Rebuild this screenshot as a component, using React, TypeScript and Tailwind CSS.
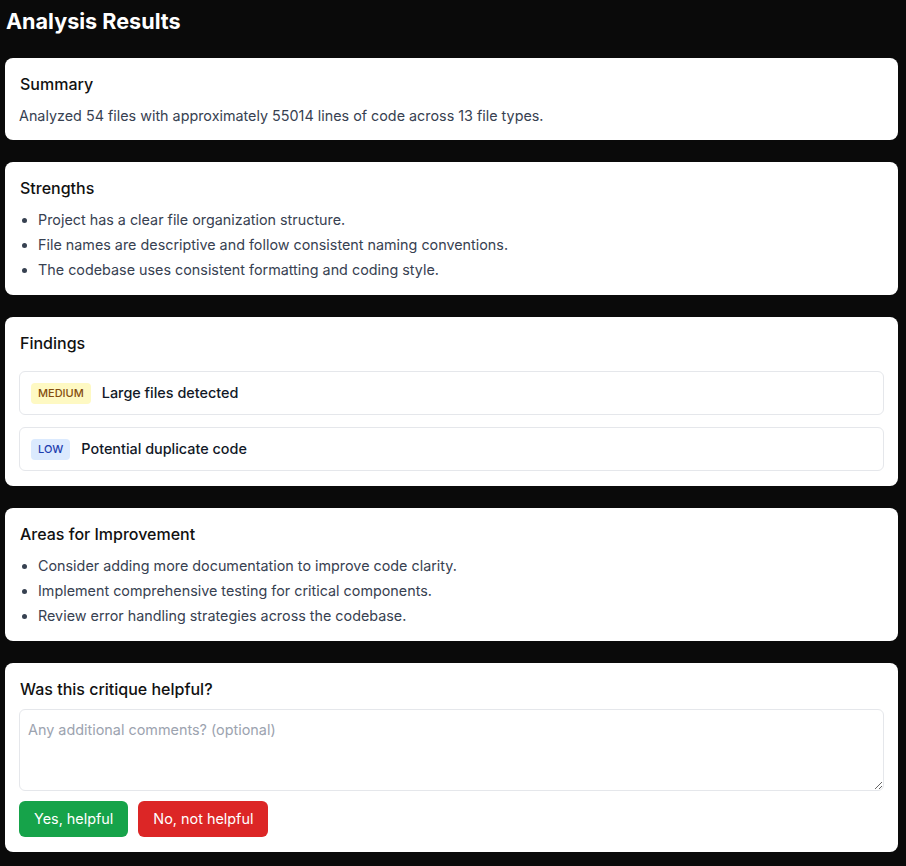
import React, { useState } from 'react'

const strengths = [
  'Project has a clear file organization structure.',
  'File names are descriptive and follow consistent naming conventions.',
  'The codebase uses consistent formatting and coding style.',
]

const improvements = [
  'Consider adding more documentation to improve code clarity.',
  'Implement comprehensive testing for critical components.',
  'Review error handling strategies across the codebase.',
]

const findings = [
  { severity: 'MEDIUM', title: 'Large files detected', badge: 'bg-[#fef9c3] text-[#854d0e]' },
  { severity: 'LOW', title: 'Potential duplicate code', badge: 'bg-[#dbeafe] text-[#1e40af]' },
]

export default function App() {
  const [comment, setComment] = useState('')

  return (
    <div
      className="min-h-screen bg-[#0a0a0a] pl-[5px] pr-[8px] pt-[5px] pb-[14px]"
      style={{ fontFamily: 'Inter, "Noto Sans", sans-serif' }}
    >
      <h1 className="text-[21.6px] leading-8 font-bold text-white pl-px mb-[21px]">Analysis Results</h1>

      <div className="flex flex-col gap-[22px]">
        <Card title="Summary" pb="pb-[14px]">
          <p className="text-[14.35px] leading-5 text-[#374151]">
            Analyzed 54 files with approximately 55014 lines of code across 13 file types.
          </p>
        </Card>

        <Card title="Strengths">
          <BulletList items={strengths} />
        </Card>

        <Card title="Findings" gap="mb-4">
          <div className="flex flex-col gap-3">
            {findings.map((f) => (
              <div
                key={f.title}
                className="flex items-center gap-[11px] border border-[#e5e7eb] rounded-md px-[11px] py-[10px]"
              >
                <span className={`text-[11px] leading-[21px] font-medium px-[7px] rounded ${f.badge}`}>
                  {f.severity}
                </span>
                <span className="text-[14.4px] leading-[22px] font-medium text-[#111827]">{f.title}</span>
              </div>
            ))}
          </div>
        </Card>

        <Card title="Areas for Improvement">
          <BulletList items={improvements} />
        </Card>

        <Card title="Was this critique helpful?" gap="mb-2">
          <textarea
            value={comment}
            onChange={(e) => setComment(e.target.value)}
            placeholder="Any additional comments? (optional)"
            className="block w-full h-[82px] border border-[#e5e7eb] rounded-md px-2 py-2 text-[14.4px] leading-6 text-[#111827] placeholder:text-[#9ca3af] focus:outline-none"
          />
          <div className="flex gap-[10px] mt-[10px]">
            <button className="bg-[#16a34a] hover:bg-[#15803d] text-white text-[14.4px] leading-5 px-[15px] py-2 rounded-md">
              Yes, helpful
            </button>
            <button className="bg-[#dc2626] hover:bg-[#b91c1c] text-white text-[14.4px] leading-5 px-[15px] py-2 rounded-md">
              No, not helpful
            </button>
          </div>
        </Card>
      </div>
    </div>
  )
}

function Card({
  title,
  children,
  gap = 'mb-[10px]',
  pb = 'pb-[15px]',
}: {
  title: string
  children: React.ReactNode
  gap?: string
  pb?: string
}) {
  return (
    <div className={`bg-white rounded-lg px-[14px] pt-[14px] ${pb}`}>
      <h2 className={`text-base leading-6 font-medium text-[#111111] pl-px ${gap}`}>{title}</h2>
      {children}
    </div>
  )
}

function BulletList({ items }: { items: string[] }) {
  return (
    <ul className="list-disc pl-[19px] flex flex-col gap-[5px]">
      {items.map((item) => (
        <li key={item} className="text-[14.35px] leading-5 text-[#374151]">
          {item}
        </li>
      ))}
    </ul>
  )
}
